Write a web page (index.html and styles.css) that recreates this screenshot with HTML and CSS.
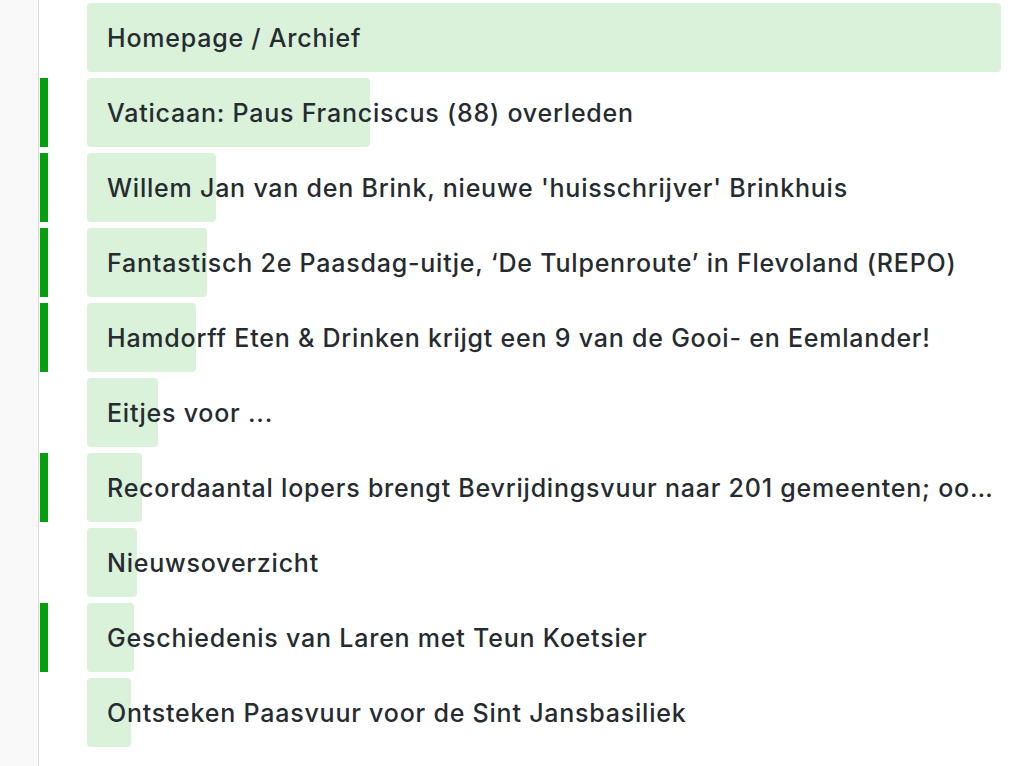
FILE: index.html
```html
<!DOCTYPE html>
<html lang="nl">
<head>
<meta charset="utf-8">
<title>Pagina's</title>
<link rel="stylesheet" href="styles.css">
</head>
<body>
<div class="page">
  <div class="gutter"></div>
  <ul class="list">
    <li class="row"><span class="marker off"></span><div class="cell"><span class="bar" style="width:914px"></span><span class="label">Homepage / Archief</span></div></li>
    <li class="row"><span class="marker"></span><div class="cell"><span class="bar" style="width:283px"></span><span class="label">Vaticaan: Paus Franciscus (88) overleden</span></div></li>
    <li class="row"><span class="marker"></span><div class="cell"><span class="bar" style="width:129px"></span><span class="label">Willem Jan van den Brink, nieuwe 'huisschrijver' Brinkhuis</span></div></li>
    <li class="row"><span class="marker"></span><div class="cell"><span class="bar" style="width:120px"></span><span class="label">Fantastisch 2e Paasdag-uitje, ‘De Tulpenroute’ in Flevoland (REPO)</span></div></li>
    <li class="row"><span class="marker"></span><div class="cell"><span class="bar" style="width:109px"></span><span class="label">Hamdorff Eten &amp; Drinken krijgt een 9 van de Gooi- en Eemlander!</span></div></li>
    <li class="row"><span class="marker off"></span><div class="cell"><span class="bar" style="width:71px"></span><span class="label">Eitjes voor ...</span></div></li>
    <li class="row"><span class="marker"></span><div class="cell"><span class="bar" style="width:55px"></span><span class="label">Recordaantal lopers brengt Bevrijdingsvuur naar 201 gemeenten; ook Laren doet mee</span></div></li>
    <li class="row"><span class="marker off"></span><div class="cell"><span class="bar" style="width:50px"></span><span class="label">Nieuwsoverzicht</span></div></li>
    <li class="row"><span class="marker"></span><div class="cell"><span class="bar" style="width:47px"></span><span class="label">Geschiedenis van Laren met Teun Koetsier</span></div></li>
    <li class="row"><span class="marker off"></span><div class="cell"><span class="bar" style="width:44px"></span><span class="label">Ontsteken Paasvuur voor de Sint Jansbasiliek</span></div></li>
  </ul>
</div>
</body>
</html>
```
FILE: styles.css
```css
html, body {
  margin: 0;
  padding: 0;
  background: #ffffff;
  height: 100%;
  overflow: hidden;
}
.page {
  display: flex;
  height: 766px;
  font-family: Inter, "Noto Sans", "Liberation Sans", sans-serif;
  color: #262b30;
}
.gutter {
  width: 38px;
  flex: none;
  background: #f9f9f9;
  border-right: 1px solid #dcdcdc;
}
.list {
  list-style: none;
  margin: 0;
  padding: 3px 0 0 0;
  display: flex;
  flex-direction: column;
  gap: 6px;
}
.row {
  display: flex;
  height: 69px;
}
.marker {
  width: 8px;
  margin-left: 1px;
  background: #03a00d;
  flex: none;
}
.marker.off {
  background: transparent;
}
.cell {
  position: relative;
  margin-left: 39px;
  width: 914px;
  box-sizing: border-box;
  padding: 0 0 0 20px;
  display: flex;
  align-items: center;
}
.bar {
  position: absolute;
  left: 0;
  top: 0;
  bottom: 0;
  background: #daf1da;
  border-radius: 4px;
}
.label {
  position: relative;
  font-size: 25px;
  font-weight: 500;
  letter-spacing: 0.78px;
  white-space: nowrap;
  overflow: hidden;
  text-overflow: ellipsis;
  min-width: 0;
}
```
